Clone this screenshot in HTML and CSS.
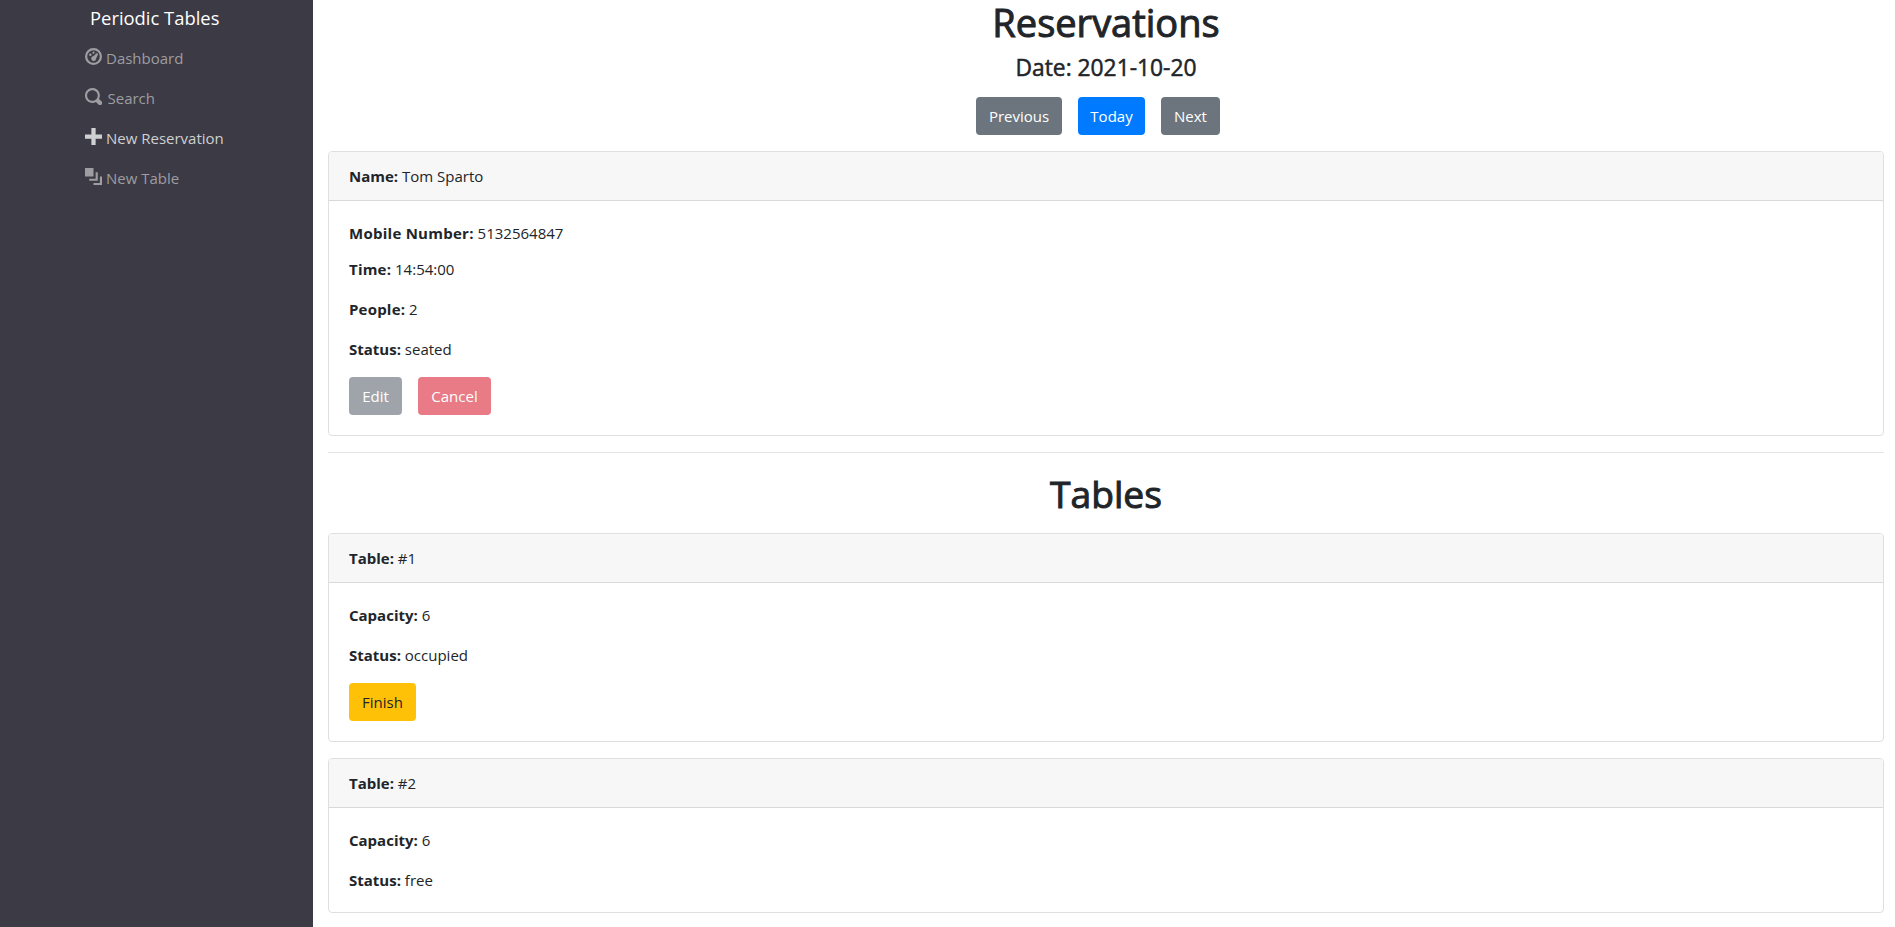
FILE: index.html
```html
<!DOCTYPE html>
<html lang="en">
<head>
<meta charset="utf-8">
<title>Periodic Tables</title>
<link rel="stylesheet" href="styles.css">
</head>
<body>
<div class="layout">
  <nav class="sidebar">
    <a class="brand">Periodic Tables</a>
    <ul class="menu">
      <li><svg class="oi" viewBox="0 0 8 8"><path fill-rule="evenodd" d="M4 0a4 4 0 1 0 0 8 4 4 0 0 0 0-8zm0 1.05a2.95 2.95 0 1 1 0 5.9 2.95 2.95 0 0 1 0-5.9z"/><circle cx="4" cy="2.2" r=".5"/><circle cx="2.5" cy="3.2" r=".6"/><circle cx="5.5" cy="3.1" r=".6"/><path d="M5.1 3L3.7 3.9a1.15 1.15 0 1 0 1.5 1.1l.7-1.5z"/></svg><span>Dashboard</span></li>
      <li><svg class="oi" viewBox="0 0 8 8"><path d="M3.5 0c-1.93 0-3.5 1.57-3.5 3.5s1.57 3.5 3.5 3.5c.59 0 1.17-.14 1.66-.41a1 1 0 0 0 .13.13l1 1a1.02 1.02 0 1 0 1.44-1.44l-1-1a1 1 0 0 0-.16-.13c.27-.49.44-1.06.44-1.66 0-1.93-1.55-3.5-3.5-3.5zm0 1c1.39 0 2.5 1.11 2.5 2.5 0 .66-.24 1.27-.66 1.72-.01.01-.02.02-.03.03a1 1 0 0 0-.13.13c-.44.4-1.04.63-1.69.63-1.39 0-2.5-1.11-2.5-2.5s1.11-2.5 2.5-2.5z"/></svg><span class="search">Search</span></li>
      <li class="active"><svg class="oi" viewBox="0 0 8 8"><path d="M3 0v3h-3v2h3v3h2v-3h3v-2h-3v-3h-2z"/></svg><span>New Reservation</span></li>
      <li><svg class="oi" viewBox="0 0 8 8"><path d="M0 0v4h4v-4h-4zm5 2v3h-3v1h4v-4h-1zm2 2v3h-3v1h4v-4h-1z"/></svg><span>New Table</span></li>
    </ul>
  </nav>
  <main class="content">
    <h1>Reservations</h1>
    <h4>Date: 2021-10-20</h4>
    <div class="pager">
      <button class="btn gray previous">Previous</button>
      <button class="btn blue today">Today</button>
      <button class="btn gray next">Next</button>
    </div>
    <section class="card">
      <header><b>Name:</b> Tom Sparto</header>
      <div class="body">
        <p class="tight"><b class="mobile">Mobile Number:</b> 5132564847</p>
        <p><b class="time">Time:</b> 14:54:00</p>
        <p><b class="time">People:</b> 2</p>
        <p><b>Status:</b> seated</p>
        <div class="actions">
          <button class="btn gray edit" disabled>Edit</button>
          <button class="btn red cancel" disabled>Cancel</button>
        </div>
      </div>
    </section>
    <hr>
    <h1 class="tables">Tables</h1>
    <section class="card">
      <header><b>Table:</b> #1</header>
      <div class="body">
        <p><b>Capacity:</b> 6</p>
        <p><b>Status:</b> occupied</p>
        <div class="actions"><button class="btn yellow finish">Finish</button></div>
      </div>
    </section>
    <section class="card">
      <header><b>Table:</b> #2</header>
      <div class="body">
        <p><b>Capacity:</b> 6</p>
        <p class="last"><b>Status:</b> free</p>
      </div>
    </section>
  </main>
</div>
</body>
</html>
```
FILE: styles.css
```css
* { box-sizing: border-box; }
body {
  margin: 0;
  font-family: "Open Sans", "Noto Sans", sans-serif;
  font-size: 15px;
  line-height: 24px;
  color: #212529;
  background: #fff;
}
.layout { display: flex; height: 927px; }
.sidebar { width: 313px; flex: none; background: #3c3a44; }
.brand {
  display: block;
  padding: 3px 0 0 90px;
  font-size: 18.4px;
  line-height: 30px;
  color: #fff;
}
.menu { list-style: none; margin: 5px 0 0; padding: 0 0 0 85px; color: #9d9da2; }
.menu li { display: flex; height: 40px; padding-top: 8px; }
.menu .active { color: #ced0d2; }
.oi { width: 17px; height: 17px; margin: 2px 4px 0 0; fill: currentColor; }
.search { padding-left: 1.5px; }
.content { flex: 1; padding: 0 11px 0 15px; }
h1, h4 { margin: 0; font-weight: 500; text-align: center; }
h1 { font-size: 38px; line-height: 46px; margin-top: -1px; -webkit-text-stroke: 1px #212529; }
h4 { font-size: 22.8px; line-height: 29px; margin-top: 8px; -webkit-text-stroke: .5px #212529; }
.pager { display: flex; gap: 16px; justify-content: center; margin: 15px 16px 16px 0; }
.btn {
  height: 38px;
  padding: 0 0 1px;
  border: 0;
  border-radius: 4px;
  font: inherit;
  color: #fff;
}
.gray { background: #6c757d; }
.blue { background: #007bff; }
.red { background: #dc3545; }
.yellow { background: #ffc107; color: #212529; }
.btn:disabled { opacity: .65; }
.previous { width: 86px; }
.today { width: 67px; }
.next { width: 59px; }
.edit { width: 53px; }
.cancel { width: 73px; }
.finish { width: 67px; }
.card { border: 1px solid #dfdfdf; border-radius: 4px; margin-bottom: 16px; }
.card header {
  padding: 12px 20px;
  background: #f7f7f7;
  border-bottom: 1px solid #d9d9d9;
  border-radius: 3px 3px 0 0;
}
.body { padding: 20px; }
p { margin: 0 0 16px; }
.tight { margin-bottom: 12px; }
.last { margin-bottom: 0; }
b { font-weight: 700; }
.mobile { letter-spacing: .26px; }
.time { letter-spacing: .2px; }
.actions { display: flex; gap: 16px; }
hr { margin: 0; border: 0; border-top: 1px solid #e5e5e5; }
.tables { margin: 18px 0 16px; font-size: 37.2px; }
```
